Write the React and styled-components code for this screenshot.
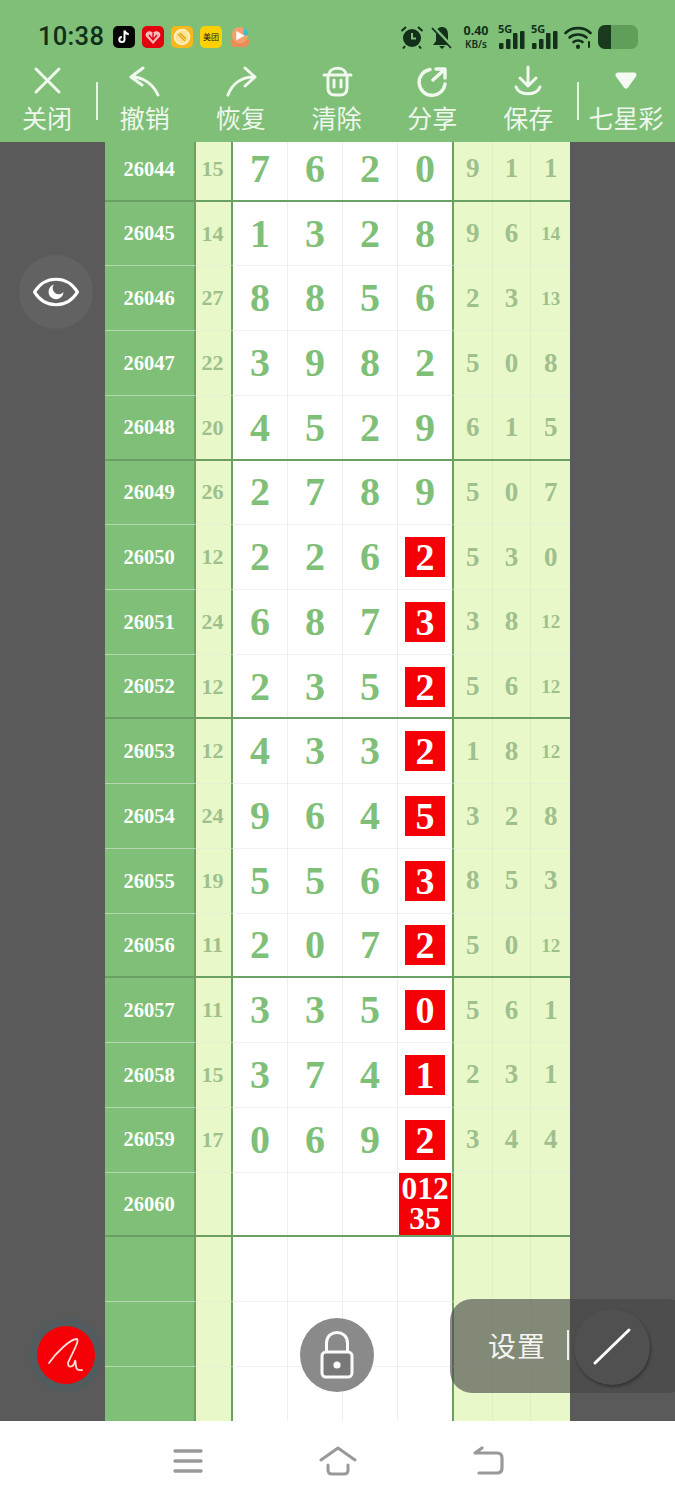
import React from "react";
import styled, { createGlobalStyle } from "styled-components";

const Global = createGlobalStyle`
  html, body { margin: 0; padding: 0; background: #fff; }
  * { box-sizing: border-box; }
`;

const Page = styled.div`
  position: relative;
  width: 675px;
  height: 1500px;
  display: flex;
  flex-direction: column;
  overflow: hidden;
  font-family: "Noto Sans CJK SC", "Noto Sans", sans-serif;
`;
const Header = styled.header`
  height: 142px;
  flex: none;
  background: #7fbf78;
  display: flex;
  flex-direction: column;
`;
const StatusBar = styled.div`
  height: 62px;
  padding: 12px 37px 0 38px;
  display: flex;
  align-items: center;
  color: #12301a;
`;
const Clock = styled.span`
  font: 500 25.5px/1 Roboto, sans-serif;
  letter-spacing: 0.3px;
  width: 75px;
  color: #10301a;
`;
const Apps = styled.div`
  display: flex;
  gap: 7px;
  align-items: center;
`;
const AppIcon = styled.div`
  width: 22px;
  height: 22px;
  border-radius: 5px;
  background: ${(p) => p.$bg};
  display: flex;
  align-items: center;
  justify-content: center;
  font-size: 8px;
  line-height: 1;
  color: #222;
`;
const Indicators = styled.div`
  margin-left: auto;
  display: flex;
  align-items: center;
  gap: 6px;
`;
const Speed = styled.div`
  width: 32px;
  display: flex;
  flex-direction: column;
  align-items: center;
  font: 700 12.5px/14px "Noto Sans", sans-serif;
  color: #12301a;
  small { font-size: 10px; font-weight: 600; line-height: 12px; }
`;
const Signal = styled.div`
  position: relative;
  width: 27px;
  height: 26px;
`;
const SignalLabel = styled.span`
  position: absolute;
  left: 0;
  top: -1px;
  font: 700 11px/12px "Noto Sans", sans-serif;
  color: #12301a;
`;
const Battery = styled.div`
  width: 40px;
  height: 24px;
  border-radius: 7px;
  background: #5f9f5a;
  overflow: hidden;
  &::before {
    content: "";
    display: block;
    width: 13px;
    height: 100%;
    background: #1b3a1d;
  }
`;
const Toolbar = styled.nav`
  height: 80px;
  display: flex;
  align-items: stretch;
`;
const Tool = styled.div`
  flex: 1 1 0;
  min-width: 0;
  display: flex;
  flex-direction: column;
  align-items: center;
  color: #f1f8ee;
  padding: 3px 2px 0 0;
  svg { display: block; }
`;
const ToolLabel = styled.span`
  font-size: 25px;
  line-height: 32px;
  margin-top: 4px;
  white-space: nowrap;
  color: #eff7ec;
`;
const Divider = styled.div`
  flex: none;
  width: 2px;
  height: 38px;
  margin-top: 20px;
  background: #e6f3e2;
`;
const Main = styled.main`
  flex: none;
  height: 1279px;
  display: flex;
  overflow: hidden;
  background: #5a5a5a;
`;
const Side = styled.div`
  flex: none;
  width: ${(p) => p.$w}px;
  background: #5a5a5a;
`;
const Table = styled.div`
  width: 465px;
  flex: none;
  margin-top: -5px;
  align-self: flex-start;
`;
const Row = styled.div`
  display: grid;
  grid-template-columns: 91px 37px 55px 55px 55px 56px repeat(3, 1fr);
  height: 64.73px;
  position: relative;
  &::after {
    content: "";
    position: absolute;
    left: 0;
    right: 0;
    bottom: ${(p) => (p.$thick ? -1 : 0)}px;
    height: ${(p) => (p.$thick ? 3 : 1)}px;
    background: ${(p) => (p.$thick ? "#6ba064" : "rgba(225,232,222,0.55)")};
  }
`;
const serif = `"Liberation Serif", "Times New Roman", serif`;
const IdCell = styled.div`
  background: #7fbf78;
  border-right: 2px solid #6ba064;
  color: #fdfffb;
  font: 700 20.5px/1 ${serif};
  display: flex;
  align-items: center;
  justify-content: center;
  padding: 0 1px 1px 0;
`;
const SumCell = styled.div`
  background: #e8f8c8;
  border-right: 2px solid #6ba064;
  color: #9dc08d;
  font: 700 22px/1 ${serif};
  display: flex;
  align-items: center;
  justify-content: center;
  padding: 0 2px 1px 0;
`;
const DigitCell = styled.div`
  background: #fff;
  border-right: ${(p) => (p.$last ? "2px solid #6ba064" : "1px solid #eeeeee")};
  color: #7fbf78;
  font: 700 40px/1 ${serif};
  display: flex;
  align-items: center;
  justify-content: center;
  padding-bottom: 1px;
`;
const Hit = styled.span`
  width: 40px;
  height: 40px;
  background: #f40006;
  color: #fff;
  display: flex;
  align-items: center;
  justify-content: center;
  font: 700 38px/1 ${serif};
`;
const MultiHit = styled.span`
  width: 52px;
  height: 62px;
  background: #f40006;
  color: #fff;
  text-align: center;
  font: 700 31.5px/30px ${serif};
  padding-top: 1px;
  word-break: break-all;
`;
const SideCell = styled.div`
  background: #e8f8c8;
  border-right: ${(p) => (p.$last ? "none" : "1px solid #dcefc0")};
  color: #9fbf8f;
  font: 700 ${(p) => (p.$small ? 19 : 27)}px/1 ${serif};
  display: flex;
  align-items: center;
  justify-content: center;
  padding-bottom: 1px;
`;
const NavBar = styled.footer`
  flex: none;
  height: 79px;
  background: #fff;
  display: flex;
  align-items: center;
  justify-content: center;
  gap: 114px;
`;
const Float = styled.div`
  position: absolute;
  left: ${(p) => p.$x - p.$r}px;
  top: ${(p) => p.$y - p.$r}px;
  width: ${(p) => p.$r * 2}px;
  height: ${(p) => p.$r * 2}px;
  border-radius: 50%;
  background: ${(p) => p.$bg};
  display: flex;
  align-items: center;
  justify-content: center;
`;
const PenDot = styled.div`
  width: 58px;
  height: 58px;
  border-radius: 50%;
  background: #f40006;
  display: flex;
  align-items: center;
  justify-content: center;
`;
const SettingsPill = styled.div`
  position: absolute;
  left: 450px;
  top: 1299px;
  width: 240px;
  height: 94px;
  border-radius: 22px;
  background: rgba(70, 70, 70, 0.62);
  display: flex;
  align-items: center;
  padding: 0 0 2px 38px;
  color: #f4f4f0;
`;
const SettingsLabel = styled.span`
  font-size: 28px;
  line-height: 1;
  letter-spacing: 1px;
  width: 79px;
`;
const SettingsBar = styled.span`
  width: 2px;
  height: 30px;
  background: #f0f0ec;
`;
const PenCircle = styled.div`
  position: absolute;
  left: 124px;
  top: 10px;
  width: 76px;
  height: 76px;
  border-radius: 50%;
  background: #505050;
  box-shadow: 1px 2px 3px rgba(30, 30, 30, 0.55);
  display: flex;
  align-items: center;
  justify-content: center;
`;

const rows = [
  ["26044", "15", "7620", "", "9", "1", "1", true],
  ["26045", "14", "1328", "", "9", "6", "14"],
  ["26046", "27", "8856", "", "2", "3", "13"],
  ["26047", "22", "3982", "", "5", "0", "8"],
  ["26048", "20", "4529", "", "6", "1", "5", true],
  ["26049", "26", "2789", "", "5", "0", "7"],
  ["26050", "12", "226", "2", "5", "3", "0"],
  ["26051", "24", "687", "3", "3", "8", "12"],
  ["26052", "12", "235", "2", "5", "6", "12", true],
  ["26053", "12", "433", "2", "1", "8", "12"],
  ["26054", "24", "964", "5", "3", "2", "8"],
  ["26055", "19", "556", "3", "8", "5", "3"],
  ["26056", "11", "207", "2", "5", "0", "12", true],
  ["26057", "11", "335", "0", "5", "6", "1"],
  ["26058", "15", "374", "1", "2", "3", "1"],
  ["26059", "17", "069", "2", "3", "4", "4"],
  ["26060", "", "", "01235", "", "", "", true],
  ["", "", "", "", "", "", ""],
  ["", "", "", "", "", "", ""],
  ["", "", "", "", "", "", ""],
];

const Stroke = ({ w = 32, h = 32, sw = 3, children }) => (
  <svg width={w} height={h} viewBox={`0 0 ${w} ${h}`} fill="none" stroke="currentColor" strokeWidth={sw} strokeLinecap="round" strokeLinejoin="round">
    {children}
  </svg>
);

const tools = [
  { label: "关闭", icon: <Stroke><path d="M5 4 L28 27 M28 4 L5 27" /></Stroke> },
  { label: "撤销", icon: <Stroke><path d="M14 3 L2 12 L13 20 M3 12 C14 12 24 19 29 30" /></Stroke> },
  { label: "恢复", icon: <Stroke><path d="M20 3 L30 12 L20 21 M29 12 C16 12 7 19 3 30" /></Stroke> },
  { label: "清除", icon: <Stroke><path d="M8 10 C8 1 25 1 25 10 M3 10 H30 M7 10 V23 Q7 30 14 30 H19 Q26 30 26 23 V10 M13 15 V22 M20 15 V22" /></Stroke> },
  { label: "分享", icon: <Stroke sw={3.4}><path d="M14 4.5 A13 13 0 1 0 29 19 M17 15 L28 5 M20 4 H29 V13" /></Stroke> },
  { label: "保存", icon: <Stroke><path d="M16 2 V20 M8 13 L16 21 L24 13 M4 22 C7 31 25 31 28 22" /></Stroke> },
];

export default function App() {
  return (
    <Page>
      <Global />
      <Header>
        <StatusBar>
          <Clock>10:38</Clock>
          <Apps>
            <AppIcon $bg="#050505">
              <svg width="16" height="16" viewBox="0 0 16 16"><path d="M8.5 1.5 V10.5 A2.6 2.6 0 1 1 5.9 7.9 M8.5 1.5 C9 3.8 10.5 5 12.8 5.2" fill="none" stroke="#fff" strokeWidth="2" /></svg>
            </AppIcon>
            <AppIcon $bg="#e2000f">
              <svg width="18" height="18" viewBox="0 0 18 18"><path d="M9 16 L2 8.5 C0 4 6 1 9 5 C12 1 18 4 16 8.5 Z" fill="#f7b9b9" /><path d="M5 7 L9 12 L13 7 M9 5 V11" stroke="#e2000f" strokeWidth="1.4" fill="none" /></svg>
            </AppIcon>
            <AppIcon $bg="#f6b81c">
              <svg width="18" height="18" viewBox="0 0 18 18"><circle cx="9" cy="9" r="7.5" fill="#fbe39a" stroke="#fff3c8" strokeWidth="1.5" /><path d="M5 6 L12 13 M7 5 L13 11" stroke="#e3a917" strokeWidth="1.6" /></svg>
            </AppIcon>
            <AppIcon $bg="#fdd000">美团</AppIcon>
            <AppIcon $bg="transparent">
              <svg width="24" height="24" viewBox="0 0 24 24"><path d="M1 15 H23 L20 23 H4 Z" fill="#e98c55" /><circle cx="12" cy="10" r="9" fill="#f4a06a" /><path d="M16 2 A9 9 0 0 1 21 10 L16 10 Z" fill="#35c0cf" /><path d="M8 5.5 L17 10.5 L8 15.5 Z" fill="#fff" /></svg>
            </AppIcon>
          </Apps>
          <Indicators>
            <svg width="24" height="24" viewBox="0 0 24 24"><circle cx="12" cy="13" r="9" fill="#12301a" /><path d="M12 8 V13.5 H16" stroke="#7fbf78" strokeWidth="2" fill="none" /><path d="M1.5 6 L6 2 M22.5 6 L18 2 M5 21 L3 23.5 M19 21 L21 23.5" stroke="#12301a" strokeWidth="2" /></svg>
            <svg width="24" height="24" viewBox="0 0 24 24"><path d="M12 2 C7 2 6 6 6 10 V16 L3 20 H21 L18 16 V10 C18 6 17 2 12 2 Z M9 21 H15 L12 24 Z" fill="#12301a" /><path d="M3 2 L22 22" stroke="#7fbf78" strokeWidth="3.5" /><path d="M2 3 L21 23" stroke="#12301a" strokeWidth="1.8" /></svg>
            <Speed>0.40<small>KB/s</small></Speed>
            {[0, 1].map((k) => (
              <Signal key={k}>
                <SignalLabel>5G</SignalLabel>
                <svg width="27" height="26" viewBox="0 0 27 26" fill="#12301a">
                  <rect x="1" y="19" width="4.5" height="6" rx="1" />
                  <rect x="8" y="15" width="4.5" height="10" rx="1" />
                  <rect x="15" y="9" width="4.5" height="16" rx="1" />
                  <rect x="22" y="7" width="4.5" height="18" rx="1" />
                </svg>
              </Signal>
            ))}
            <svg width="28" height="24" viewBox="0 0 28 24" fill="none" stroke="#12301a" strokeWidth="2.6" strokeLinecap="round">
              <path d="M1.5 8 C8 1.5 20 1.5 26.5 8" />
              <path d="M5.5 12.5 C10 8.5 18 8.5 22.5 12.5" />
              <path d="M9.5 17 C12 15 16 15 18.5 17" />
              <path d="M14 21.5 L14 22" strokeWidth="4" />
              <path d="M25 17 V22" strokeWidth="2" />
            </svg>
            <Battery />
          </Indicators>
        </StatusBar>
        <Toolbar>
          {tools.map((t, i) => (
            <React.Fragment key={t.label}>
              <Tool>
                {t.icon}
                <ToolLabel>{t.label}</ToolLabel>
              </Tool>
              {i === 0 && <Divider />}
            </React.Fragment>
          ))}
          <Divider />
          <Tool>
            <svg width="32" height="32" viewBox="0 0 32 32"><path d="M8 10 H24 L16 21 Z" fill="#f4faf2" stroke="#f4faf2" strokeWidth="5" strokeLinejoin="round" /></svg>
            <ToolLabel>七星彩</ToolLabel>
          </Tool>
        </Toolbar>
      </Header>

      <Main>
        <Side $w={105} />
        <Table>
          {rows.map((r, i) => {
            const [id, sum, digits, hit, a, b, c, thick] = r;
            const cells = digits ? [digits[0], digits[1], digits[2]] : ["", "", ""];
            const last = hit ? null : digits[3] || "";
            return (
              <Row key={i} $thick={thick}>
                <IdCell>{id}</IdCell>
                <SumCell>{sum}</SumCell>
                {cells.map((v, j) => (
                  <DigitCell key={j}>{v}</DigitCell>
                ))}
                <DigitCell $last>
                  {hit && hit.length > 1 ? <MultiHit>{hit}</MultiHit> : hit ? <Hit>{hit}</Hit> : last}
                </DigitCell>
                <SideCell $small={a.length > 1}>{a}</SideCell>
                <SideCell $small={b.length > 1}>{b}</SideCell>
                <SideCell $last $small={c.length > 1}>{c}</SideCell>
              </Row>
            );
          })}
        </Table>
        <Side $w={105} />
      </Main>

      <NavBar>
        <svg width="34" height="30" viewBox="0 0 34 30" stroke="#999" strokeWidth="3.4" strokeLinecap="round">
          <path d="M4 5 H30 M4 15 H30 M4 25 H30" />
        </svg>
        <svg width="38" height="30" viewBox="0 0 38 30" fill="none" stroke="#999" strokeWidth="3" strokeLinecap="round" strokeLinejoin="round">
          <path d="M2 14 L19 2 L36 14 M9 19 V24 Q9 28 13 28 H25 Q29 28 29 24 V19" />
        </svg>
        <svg width="34" height="30" viewBox="0 0 34 30" fill="none" stroke="#999" strokeWidth="3.2" strokeLinecap="round" strokeLinejoin="round">
          <path d="M8 27 H26 Q31 27 31 22 V12 Q31 7 26 7 H4 M4 7 L11 2" />
        </svg>
      </NavBar>

      <Float $x={56} $y={292} $r={37} $bg="#626262">
        <svg width="46" height="32" viewBox="0 0 46 32" fill="none">
          <path d="M1.5 16 C12 -1 34 -1 44.5 16 C34 33 12 33 1.5 16 Z" stroke="#fff" strokeWidth="3.2" strokeLinejoin="round" />
          <path d="M21 8.5 A7.5 7.5 0 1 0 30.5 16 A4.5 4.5 0 0 1 21 8.5 Z" fill="#fff" />
        </svg>
      </Float>
      <Float $x={66} $y={1355} $r={37} $bg="#525c5e">
        <PenDot>
          <svg width="36" height="36" viewBox="0 0 36 36" fill="none" stroke="#ffe0dc" strokeWidth="1.8" strokeLinecap="round" strokeLinejoin="round">
            <path d="M1 26 C8 16 22 2 29 2 C32 4 22 20 20 26 C20 32 26 30 27 24 C28 22 27 30 29 32 C31 34 33 33 34 33" />
          </svg>
        </PenDot>
      </Float>
      <Float $x={337} $y={1355} $r={37} $bg="#8a8a8a">
        <svg width="42" height="52" viewBox="0 0 42 52" fill="none" stroke="#fbfbfb" strokeWidth="3">
          <rect x="6" y="23" width="30" height="25" rx="4" fill="#787878" />
          <path d="M10.5 23 V14 C10.5 0 31.5 0 31.5 14 V23" />
          <circle cx="21" cy="36" r="3.6" fill="#fbfbfb" stroke="none" />
        </svg>
      </Float>
      <SettingsPill>
        <SettingsLabel>设置</SettingsLabel>
        <SettingsBar />
        <PenCircle>
          <svg width="40" height="40" viewBox="0 0 40 40">
            <path d="M3 36 L37 3" stroke="#fff" strokeWidth="3" strokeLinecap="round" />
          </svg>
        </PenCircle>
      </SettingsPill>
    </Page>
  );
}
